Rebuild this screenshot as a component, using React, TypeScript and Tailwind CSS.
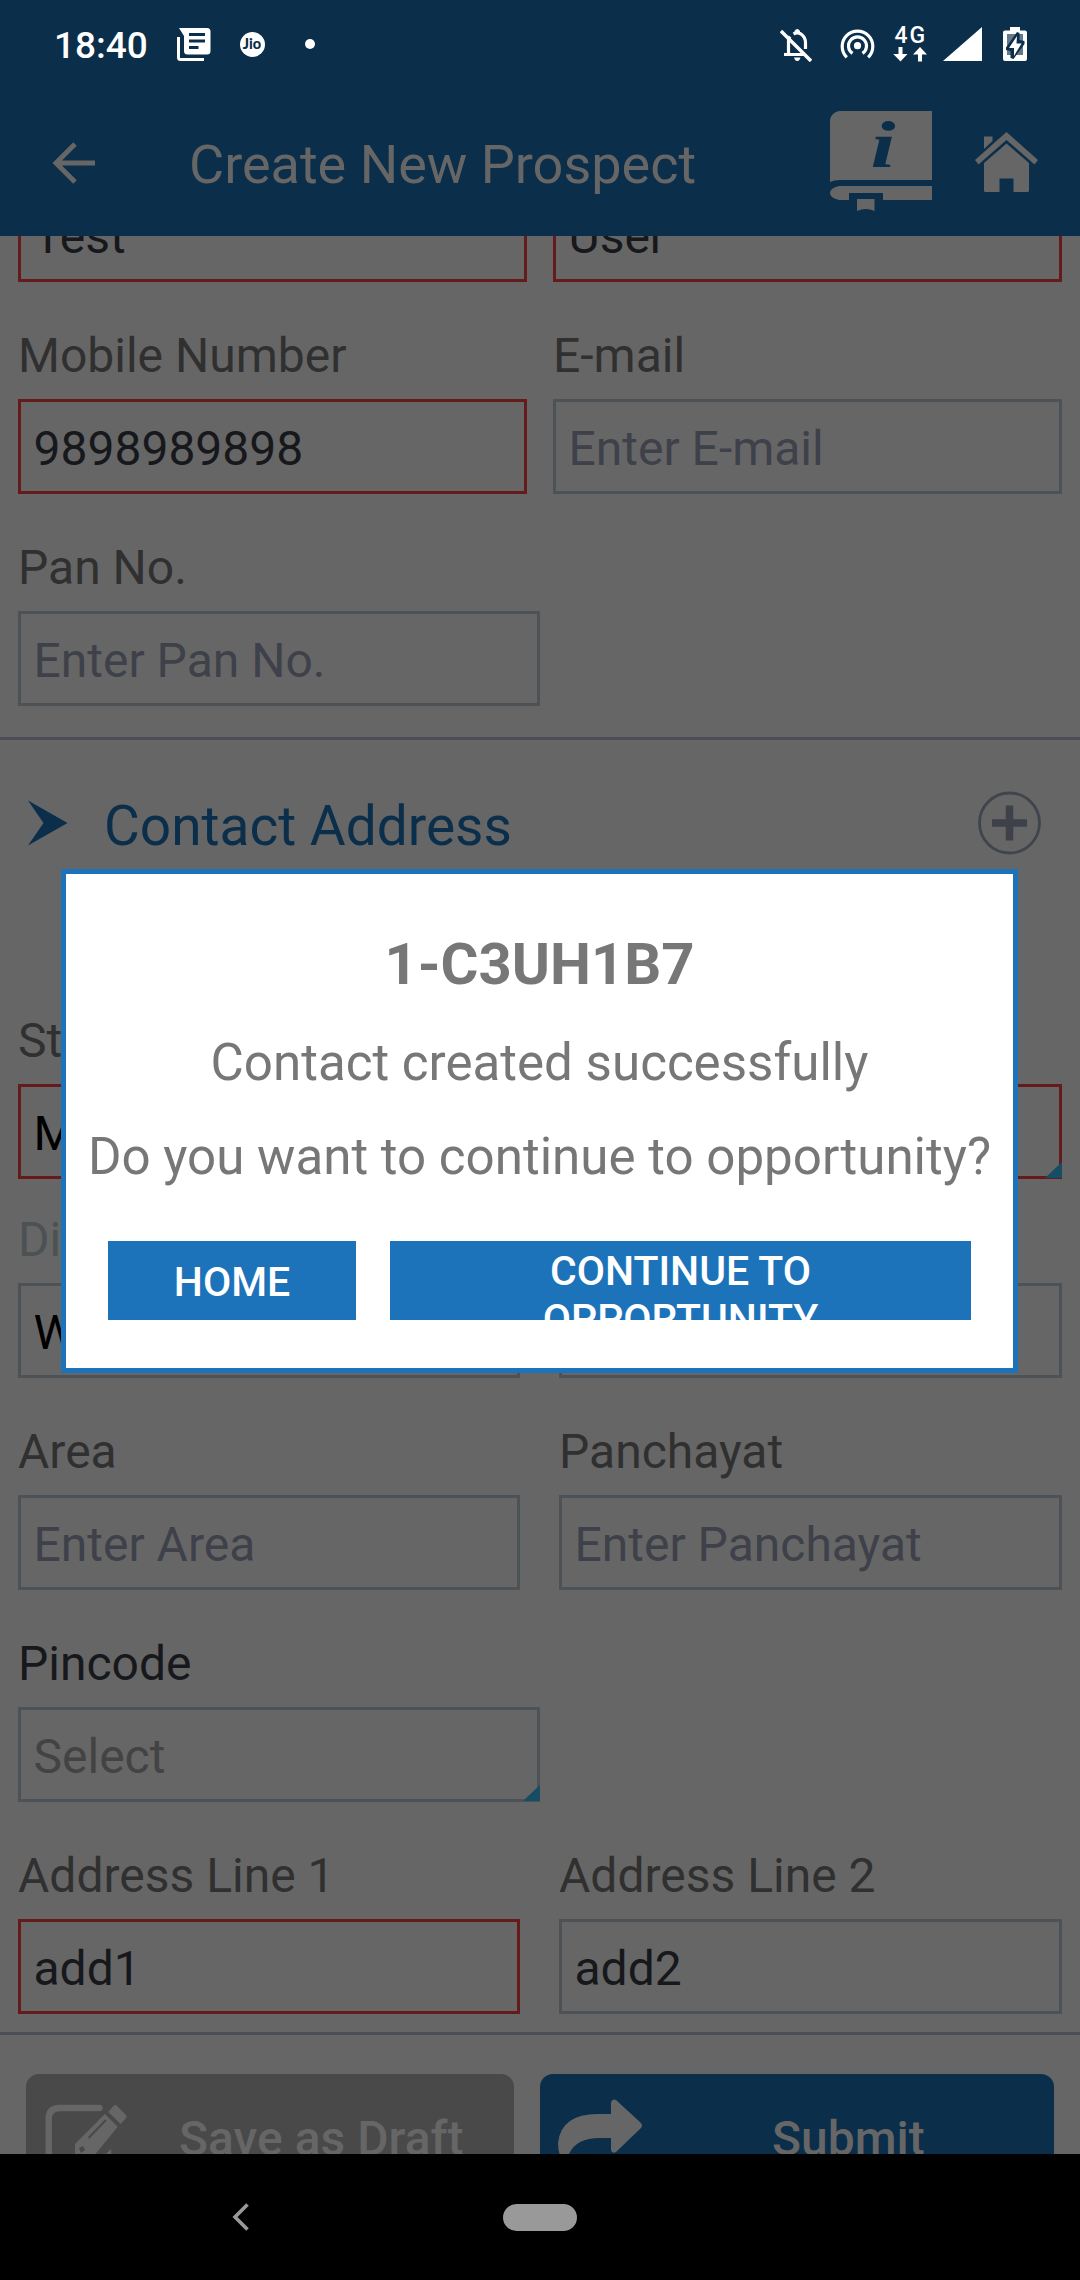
import type { ReactNode } from "react";

type Tone = "value" | "placeholder" | "select" | "black";

const toneClass: Record<Tone, string> = {
  value: "text-[#17181c]",
  placeholder: "text-[#3e4149]",
  select: "text-[#434343]",
  black: "text-black",
};

function Field({
  label,
  text,
  tone = "placeholder",
  required = false,
  dropdown = false,
  labelClass = "text-[#303030]",
  width,
}: {
  label: string;
  text: string;
  tone?: Tone;
  required?: boolean;
  dropdown?: boolean;
  labelClass?: string;
  width: string;
}) {
  return (
    <div className={`shrink-0 ${width}`}>
      <div className={`h-[56px] whitespace-nowrap text-[48px] leading-[56px] ${labelClass}`}>{label}</div>
      <div
        className={`relative mt-[15px] flex h-[95px] items-center border-[3px] pl-[12.5px] pt-1 ${
          required ? "border-[#651b1b]" : "border-[#4d5256]"
        }`}
      >
        <span className={`whitespace-nowrap text-[48px] leading-[56px] ${toneClass[tone]}`}>{text}</span>
        {dropdown && (
          <svg className="absolute -right-[3px] -bottom-[2px] h-4 w-[17px]" viewBox="0 0 17 16">
            <path d="M17 0V16H0Z" fill="#144d64" />
          </svg>
        )}
      </div>
    </div>
  );
}

function Row({ children, className }: { children: ReactNode; className: string }) {
  return <div className={`flex pl-[18px] ${className}`}>{children}</div>;
}

function StatusBar() {
  return (
    <div className="flex h-[88px] text-white">
      <div className="ml-[54px] mt-[23px] w-[123px] text-[37px] font-medium leading-[46px]">18:40</div>
      <svg className="mt-[28px] h-[34px] w-[34px]" viewBox="0 0 34 34">
        <path
          fill="#fff"
          fillRule="evenodd"
          d="M2 0H30Q33.5 0 33.5 3.500V23Q33.500 26.500 30 26.500H10.500Q7 26.500 7 23V8ZM12 5V8H28V5ZM12 11.500V14.500H28V11.500ZM12 18V21H21.500V18Z"
        />
        <path d="M1.500 9V29.500Q1.500 31.500 3.500 31.500H27" fill="none" stroke="#fff" strokeWidth="3" />
      </svg>
      <div className="ml-[28.500px] mt-[32px] flex h-[25px] w-[25px] items-center justify-center rounded-full bg-white font-['Lato'] text-[14.500px] font-black leading-none text-[#0b2e4a]">
        Jio
      </div>
      <div className="ml-[40.500px] mt-[39px] h-[10px] w-[10px] rounded-full bg-white" />
      <svg className="ml-[465px] mt-[28px] h-[34px] w-[32px]" viewBox="780 28 32 34" fill="none" stroke="#fff" strokeWidth="3.400">
        <path d="M781 31L811 61" />
        <path d="M784 54.500H805M788.500 54V41Q788.500 38.500 790 36.500M793.500 34Q797 32 801 34Q805.500 37 805.500 43V49" strokeWidth="3.200" />
        <path d="M794.500 33V31Q797.300 27 800 31V33ZM794 57.500H800.500Q799.500 61 797.300 61Q795 61 794 57.500Z" fill="#fff" stroke="none" />
      </svg>
      <svg className="ml-[28px] mt-[28px] h-[34px] w-[35px]" viewBox="840 28 35 34" fill="none" stroke="#fff" strokeWidth="3.200">
        <circle cx="857.500" cy="45.700" r="3.600" fill="#fff" stroke="none" />
        <path d="M852.500 53.400A9 9 0 1 1 862.500 53.400" />
        <path d="M846.800 57.300A15.300 15.300 0 1 1 868.200 57.300" />
      </svg>
      <div className="ml-[18px] mt-[26px] flex w-[38px] flex-col">
        <span className="h-[20px] pl-[1.500px] text-[23px] font-medium leading-[20px] tracking-[2px]">4G</span>
        <svg className="mt-[1px] h-[15px] w-[35px]" viewBox="893 47 35 15" fill="#fff">
          <path d="M898.500 47H902.500V54H907.500L900.500 61.500L893.300 54H898.500ZM918 61.500H922V54.500H927L920 47L913 54.500H918Z" />
        </svg>
      </div>
      <svg className="ml-[12px] mt-[27px] h-[34px] w-[39px]" viewBox="0 0 39 34">
        <path d="M39 0V34H0Z" fill="#fff" />
      </svg>
      <svg className="ml-[21px] mt-[27px] h-[34px] w-[24px]" viewBox="0 0 24 34">
        <path d="M7 0H17V3.500H22Q24 3.500 24 5.500V32Q24 34 22 34H2Q0 34 0 32V5.500Q0 3.500 2 3.500H7Z" fill="#fff" />
        <path d="M4 7H20V28H4Z" fill="#66798a" />
        <path d="M14 5L3 20.500V23L7.500 24V31L10.500 32L21.500 17V14L16.500 13V6Z" fill="#0b2e4a" />
        <path d="M14 9L6 21H11V29L18.500 16.500H13.500Z" fill="#fff" />
      </svg>
    </div>
  );
}

function AppBar() {
  return (
    <div className="flex h-[148px] text-[#666]">
      <svg className="ml-[52px] mt-[54px] h-[42px] w-[43px]" viewBox="0 0 43 42" fill="none" stroke="#666" strokeWidth="5">
        <path d="M23 2L4 21L23 40M4 21H43" />
      </svg>
      <div className="ml-[94px] mt-[45px] w-[641px] whitespace-nowrap text-[54px] leading-[64px]">Create New Prospect</div>
      <svg className="mt-[23px] h-[100px] w-[102px]" viewBox="0 0 102 100">
        <path
          fill="#666"
          d="M9 0H102V69H10Q4 69 0 71V9Q1 2 9 0ZM9 75H102V89H53V82H19V89H9Q0 87 0 82Q0 77 9 75ZM27 88H44.500V100Q36 96 27 100Z"
        />
        <text x="40.500" y="55.500" fill="#0b2e4a" fontSize="65" fontStyle="italic" fontWeight="700" fontFamily="'Liberation Serif', serif" textLength="25" lengthAdjust="spacingAndGlyphs">
          i
        </text>
      </svg>
      <svg className="ml-[43px] mt-[44px] h-[60px] w-[63px]" viewBox="0 0 63 60">
        <path
          fill="#666"
          d="M9 4.500H17.500V9L9 17ZM31.500 0L63 28L59.500 32.500L31.500 8L3.500 32.500L0 28ZM31.500 11.500L54 31V58.500Q54 60 52.500 60H38.500V46.500H24.500V60H10.500Q9 60 9 58.500V31Z"
        />
      </svg>
    </div>
  );
}

function Form() {
  return (
    <div className="h-[1918px] overflow-hidden bg-[#666]">
      <Row className="-mt-[120px] gap-[26px]">
        <Field label="First Name" text="Test" tone="value" required width="w-[509px]" />
        <Field label="Last Name" text="User" tone="value" required width="w-[509px]" />
      </Row>
      <Row className="mt-[46px] gap-[26px]">
        <Field label="Mobile Number" text="9898989898" tone="value" required width="w-[509px]" />
        <Field label="E-mail" text="Enter E-mail" width="w-[509px]" />
      </Row>
      <Row className="mt-[46px]">
        <Field label="Pan No." text="Enter Pan No." width="w-[522px]" />
      </Row>
      <div className="mt-[31px] h-[3px] bg-[#4b4e56]" />
      <div className="flex h-[288px]">
        <svg className="ml-[28px] mt-[60px] h-[46px] w-[40px]" viewBox="0 0 40 46">
          <path d="M0 0.500L39.500 23L0 45.500L15.500 23Z" fill="#0b2e4a" />
        </svg>
        <div className="ml-[36px] mt-[54px] w-[874px] text-[55px] leading-[64px] text-[#0b2e4a]">Contact Address</div>
        <svg className="mt-[51px] h-[64px] w-[64px]" viewBox="0 0 64 64">
          <circle cx="31.500" cy="32" r="30" fill="none" stroke="#40444d" strokeWidth="2.800" />
          <path d="M14 32H49M31.500 14.500V49.500" stroke="#3e4149" strokeWidth="7.500" />
        </svg>
      </div>
      <Row className="-mt-[15px] gap-[39px]">
        <Field label="State" text="MH" tone="black" required dropdown width="w-[502px]" />
        <Field label="" text="" tone="black" required dropdown width="w-[503px]" />
      </Row>
      <Row className="mt-[33px] gap-[39px]">
        <Field label="District" text="WA" tone="black" labelClass="text-[#4c5154]" width="w-[502px]" />
        <Field label="" text="" tone="black" width="w-[503px]" />
      </Row>
      <Row className="mt-[46px] gap-[39px]">
        <Field label="Area" text="Enter Area" width="w-[502px]" />
        <Field label="Panchayat" text="Enter Panchayat" width="w-[503px]" />
      </Row>
      <Row className="mt-[46px]">
        <Field label="Pincode" text="Select" tone="select" dropdown labelClass="text-[#17181c]" width="w-[522px]" />
      </Row>
      <Row className="mt-[46px] gap-[39px]">
        <Field label="Address Line 1" text="add1" tone="value" required width="w-[502px]" />
        <Field label="Address Line 2" text="add2" tone="value" width="w-[503px]" />
      </Row>
      <div className="mt-[18px] h-[3px] bg-[#4b4e56]" />
      <div className="mt-[39px] flex gap-[26px] pl-[26px] text-[48px] font-medium leading-[56px] text-[#666]">
        <div className="flex h-[120px] w-[488px] rounded-[13px] bg-[#494949]">
          <svg className="ml-[19px] mt-[30px] h-[84px] w-[84px]" viewBox="45 2104 84 84">
            <path d="M108 2150V2172Q108 2182 98 2182H60Q48.700 2182 48.700 2171V2119Q48.700 2108 60 2108H99.500" fill="none" stroke="#666" strokeWidth="6.400" strokeLinecap="round" />
            <path d="M95 2150L112 2140V2148L100 2160Z" fill="#494949" />
            <path d="M108.300 2111.700L114 2105.500Q115.500 2104.500 117 2106L126 2115Q127 2116.500 126 2118L120.600 2124ZM104.800 2114L117.800 2126.700L93 2157L75 2160V2144Z" fill="#666" />
            <path d="M106 2120L88.500 2138" stroke="#494949" strokeWidth="2" />
            <path d="M79 2148L83 2146L85 2150L81 2153Z" fill="#494949" />
          </svg>
          <div className="ml-[50px] mt-[37px] whitespace-nowrap">Save as Draft</div>
        </div>
        <div className="flex h-[120px] w-[514px] rounded-[13px] bg-[#0b2e4a]">
          <svg className="ml-[18px] mt-[25px] h-[84px] w-[84px]" viewBox="0 0 84 84">
            <path d="M53 15V4Q54-1 58 1L83 24Q85 27 83 29L58 53Q54 55 53 51V39H42Q18 39 11 55L8 66Q0 58 0 44Q3 15 40 15Z" fill="#666" />
          </svg>
          <div className="ml-[130px] mt-[37px]">Submit</div>
        </div>
      </div>
    </div>
  );
}

function Dialog() {
  return (
    <div className="absolute left-[61px] top-[869px] flex h-[504px] w-[957px] flex-col items-center border-[5px] border-[#1d73b9] bg-white text-[#777]">
      <div className="mt-[56px] text-[58px] font-bold leading-[68px]">1-C3UH1B7</div>
      <div className="mt-[35px] whitespace-nowrap text-[51.100px] leading-[60px]">Contact created successfully</div>
      <div className="mt-[34px] whitespace-nowrap text-[51.100px] leading-[60px]">Do you want to continue to opportunity?</div>
      <div className="mt-[54px] flex w-full gap-[34px] pl-[42px] text-center text-[41px] font-medium leading-[48px] text-white">
        <div className="h-[79px] w-[248px] bg-[#1d73b9] pt-[17px]">HOME</div>
        <div className="h-[79px] w-[581px] overflow-hidden bg-[#1d73b9] px-[100px] pt-[6px]">CONTINUE TO OPPORTUNITY</div>
      </div>
    </div>
  );
}

function NavBar() {
  return (
    <div className="flex h-[126px] bg-black">
      <svg className="ml-[232px] mt-[49px] h-[28px] w-[17px]" viewBox="0 0 17 28" fill="none" stroke="#999" strokeWidth="3.600">
        <path d="M15.500 1.500L3 14L15.500 26.500" />
      </svg>
      <div className="ml-[254px] mt-[49.500px] h-[27px] w-[74px] rounded-full bg-[#999]" />
    </div>
  );
}

export default function App() {
  return (
    <div className="relative h-[2280px] w-[1080px] overflow-hidden bg-[#0b2e4a] font-['Roboto',sans-serif]">
      <StatusBar />
      <AppBar />
      <Form />
      <NavBar />
      <Dialog />
    </div>
  );
}
